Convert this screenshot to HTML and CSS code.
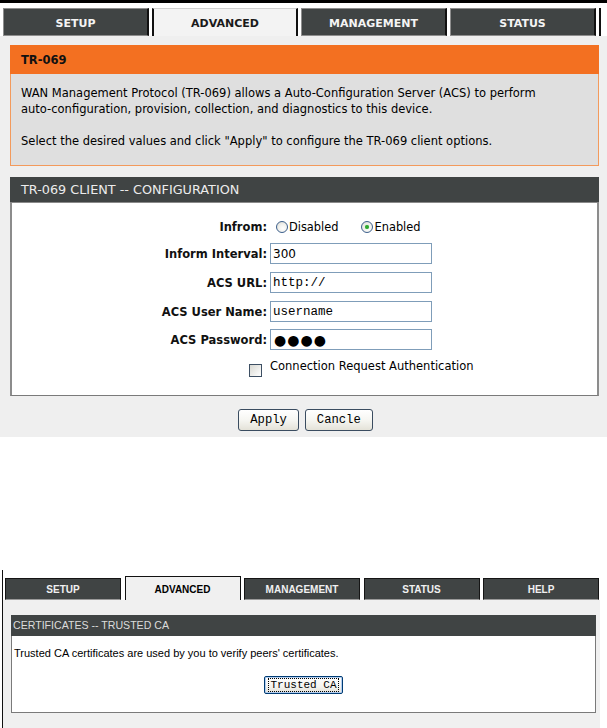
FILE: index.html
```html
<!DOCTYPE html>
<html>
<head>
<meta charset="utf-8">
<title>TR-069</title>
<link rel="stylesheet" href="styles.css">
</head>
<body>
<div class="screen s1">
  <div class="topline"></div>
  <div class="tabs">
    <div class="tab">SETUP</div>
    <div class="tab active">ADVANCED</div>
    <div class="tab">MANAGEMENT</div>
    <div class="tab">STATUS</div>
    <div class="tab-stub"></div>
  </div>
  <div class="content">
    <div class="obox">
      <div class="otitle">TR-069</div>
      <div class="obody">
        <p>WAN Management Protocol (TR-069) allows a Auto-Configuration Server (ACS) to perform<br>auto-configuration, provision, collection, and diagnostics to this device.</p>
        <p>Select the desired values and click "Apply" to configure the TR-069 client options.</p>
      </div>
    </div>
    <div class="dbox">
      <div class="dtitle">TR-069 CLIENT -- CONFIGURATION</div>
      <div class="form">
        <div class="row r-radio">
          <span class="lbl">Infrom:</span>
          <div class="val">
            <input type="radio" name="inform" class="radio first">
            <span class="rtext">Disabled</span>
            <input type="radio" name="inform" class="radio second" checked>
            <span class="rtext">Enabled</span>
          </div>
        </div>
        <div class="row">
          <span class="lbl">Inform Interval:</span>
          <div class="val"><input type="text" class="field sans" value="300"></div>
        </div>
        <div class="row">
          <span class="lbl">ACS URL:</span>
          <div class="val"><input type="text" class="field mono" value="http://"></div>
        </div>
        <div class="row r-user">
          <span class="lbl">ACS User Name:</span>
          <div class="val"><input type="text" class="field mono" value="username"></div>
        </div>
        <div class="row">
          <span class="lbl">ACS Password:</span>
          <div class="val"><input type="text" class="field pw" value="●●●●"></div>
        </div>
        <div class="row r-check">
          <div class="chkcell"><input type="checkbox" class="chk"></div>
          <span class="ctext">Connection Request Authentication</span>
        </div>
      </div>
    </div>
    <div class="actions">
      <button class="xpbtn">Apply</button>
      <button class="xpbtn">Cancle</button>
    </div>
  </div>
</div>

<div class="screen s2">
  <div class="tabs2">
    <div class="tab2">SETUP</div>
    <div class="tab2 active">ADVANCED</div>
    <div class="tab2">MANAGEMENT</div>
    <div class="tab2">STATUS</div>
    <div class="tab2">HELP</div>
  </div>
  <div class="content2">
    <div class="h2">CERTIFICATES -- TRUSTED CA</div>
    <div class="b2">
      <p>Trusted CA certificates are used by you to verify peers' certificates.</p>
      <div class="btnrow"><button class="xpbtn2"><span class="focus">Trusted CA</span></button></div>
    </div>
  </div>
</div>
</body>
</html>
```

FILE: styles.css
```css
html, body {
  margin: 0;
  padding: 0;
  background: #ffffff;
}
body {
  width: 607px;
  height: 728px;
  overflow: hidden;
  font-family: "DejaVu Sans", sans-serif;
  color: #000;
}

/* ---------- screen 1 ---------- */
.s1 {
  height: 437px;
  display: flex;
  flex-direction: column;
}
.topline {
  height: 3px;
  flex: none;
  background: #000;
}
.tabs {
  height: 33px;
  flex: none;
  display: flex;
  align-items: flex-end;
  gap: 3px;
  padding-left: 3px;
  background: #fff;
}
.tab {
  box-sizing: border-box;
  width: 146px;
  height: 28px;
  flex: none;
  padding-top: 2px;
  background: #404444;
  color: #f4f4f4;
  font: bold 11px "DejaVu Sans", sans-serif;
  display: flex;
  align-items: center;
  justify-content: center;
  border: 1px solid #8e8e8e;
  border-right: 2px solid #111;
}
.tab.active {
  background: #f3f3f3;
  color: #1a1a1a;
  border: none;
  border-left: 2px solid #111;
  border-right: 2px solid #111;
  border-top: 1px solid #d0d0d0;
}
.tab-stub {
  flex: 1;
  height: 28px;
  border-left: 2px solid #111;
  background: #fff;
}
.content {
  flex: 1;
  background: #efefef;
  padding: 9px 8px 0 10px;
}
.obox p {
  margin: 0 0 16px;
}
.otitle {
  height: 29px;
  padding-left: 11px;
  background: #f37021;
  font: bold 11.5px "DejaVu Sans", sans-serif;
  line-height: 30px;
  color: #111;
}
.obody {
  background: #dfdfdf;
  border: 1px solid #f39a5c;
  border-top: none;
  padding: 11px 10px 0;
  font-size: 11.5px;
  line-height: 16px;
}
.dbox {
  margin-top: 11px;
}
.dtitle {
  height: 25px;
  padding-left: 11px;
  background: #404444;
  border-bottom: 1px solid #8a8a8a;
  color: #ececec;
  font-size: 12.8px;
  line-height: 25px;
}
.form {
  background: #fff;
  border-left: 2px solid #8c8c8c;
  border-right: 2px solid #8c8c8c;
  border-bottom: 1px solid #7a7a7a;
  padding: 13px 0 18px;
}
.row {
  display: grid;
  grid-template-columns: 255px 1fr;
  column-gap: 3px;
  align-items: center;
  height: 21px;
  margin-bottom: 8px;
}
.row.r-radio {
  margin-bottom: 6px;
}
.row.r-user {
  margin-bottom: 7px;
}
.lbl {
  text-align: right;
  font: bold 11.5px "DejaVu Sans", sans-serif;
  color: #111;
}
.val {
  display: flex;
  align-items: center;
}
.radio {
  appearance: none;
  -webkit-appearance: none;
  box-sizing: border-box;
  width: 12px;
  height: 12px;
  margin: 0;
  border: 1px solid #3c5f8c;
  border-radius: 50%;
  background: radial-gradient(circle at 60% 65%, #ffffff 0%, #f2f2ee 45%, #d6d6ce 100%);
  position: relative;
}
.radio.first {
  margin-left: 6px;
}
.radio.second {
  margin-left: 23px;
}
.radio:checked::after {
  content: "";
  position: absolute;
  left: 3px;
  top: 3px;
  width: 4px;
  height: 4px;
  border-radius: 50%;
  background: #2fa82f;
  box-shadow: 0 0 1px #7ad27a;
}
.rtext {
  margin-left: 1px;
  font-size: 11.4px;
}
.field {
  box-sizing: border-box;
  width: 162px;
  height: 21px;
  margin: 0;
  padding: 0 2px;
  border: 1px solid #7f9db9;
  background: #fff;
  color: #000;
  outline: none;
}
.field.sans {
  font: 12px "DejaVu Sans", sans-serif;
}
.field.mono {
  font: 12.5px "Liberation Mono", monospace;
}
.field.pw {
  font: 14px "DejaVu Sans", sans-serif;
  letter-spacing: 1px;
  padding-left: 3px;
}
.row.r-check {
  align-items: start;
  height: 18px;
  margin: 9px 0 0;
}
.chkcell {
  display: flex;
  justify-content: flex-end;
}
.chk {
  appearance: none;
  -webkit-appearance: none;
  box-sizing: border-box;
  width: 13px;
  height: 13px;
  margin: 5px 5px 0 0;
  border: 1px solid #3d4f63;
  background: linear-gradient(135deg, #d8d8d2 0%, #f4f4f2 70%, #ffffff 100%);
}
.ctext {
  font-size: 11.5px;
  line-height: 14px;
}
.actions {
  display: flex;
  justify-content: center;
  gap: 6px;
  padding-top: 13px;
  padding-left: 4px;
  margin-left: -10px;
  margin-right: -8px;
}
.xpbtn {
  box-sizing: border-box;
  height: 22px;
  padding: 0 11px;
  margin: 0;
  border: 1px solid #3a4c60;
  border-radius: 3px;
  background: linear-gradient(#ffffff 0%, #f6f6f2 50%, #e4e2d8 100%);
  font: 12.2px "Liberation Mono", monospace;
  color: #000;
}

/* ---------- screen 2 ---------- */
.s2 {
  margin-top: 133px;
  margin-left: 2px;
  height: 158px;
  border-left: 1px solid #111;
  display: flex;
  flex-direction: column;
}
.tabs2 {
  height: 30px;
  flex: none;
  display: flex;
  align-items: flex-end;
  gap: 3.5px;
  padding-left: 2px;
  background: #fff;
}
.tab2 {
  box-sizing: border-box;
  width: 116px;
  height: 22px;
  flex: none;
  background: #404444;
  color: #f0f0f0;
  font: bold 10px "Liberation Sans", sans-serif;
  display: flex;
  align-items: center;
  justify-content: center;
  border: 1px solid #151515;
  border-bottom: 1px solid #9a9a9a;
}
.tab2.active {
  height: 24px;
  padding-top: 1px;
  background: #f0f0f0;
  color: #000;
  border: 1px solid #111;
  border-bottom: none;
}
.content2 {
  flex: 1;
  box-sizing: border-box;
  width: 597px;
  background: #f0f0f0;
  padding: 15px 4px 0 8px;
}
.h2 {
  height: 21px;
  padding-left: 2px;
  background: #404444;
  color: #dcdcdc;
  font: 10.6px "Liberation Sans", sans-serif;
  line-height: 21px;
}
.b2 {
  background: #fff;
  border: 1px solid #7a7a7a;
  border-top: none;
  padding: 10px 2px 18px;
  font: 11px "Liberation Sans", sans-serif;
  line-height: 14px;
}
.b2 p {
  margin: 0;
}
.btnrow {
  margin-top: 16px;
  display: flex;
  justify-content: center;
}
.xpbtn2 {
  box-sizing: border-box;
  height: 18px;
  padding: 0 3px;
  margin: 0;
  border: 1px solid #003c74;
  border-radius: 2px;
  background: linear-gradient(#ffffff 0%, #f4f4f0 60%, #e2e0d6 100%);
  box-shadow: inset 0 0 0 1px #b4cef0;
  font: 11px "Liberation Mono", monospace;
  color: #000;
  display: flex;
  align-items: center;
}
.focus {
  display: block;
  border: 1px dotted #000;
  padding: 0 1px;
  line-height: 12px;
}
```
